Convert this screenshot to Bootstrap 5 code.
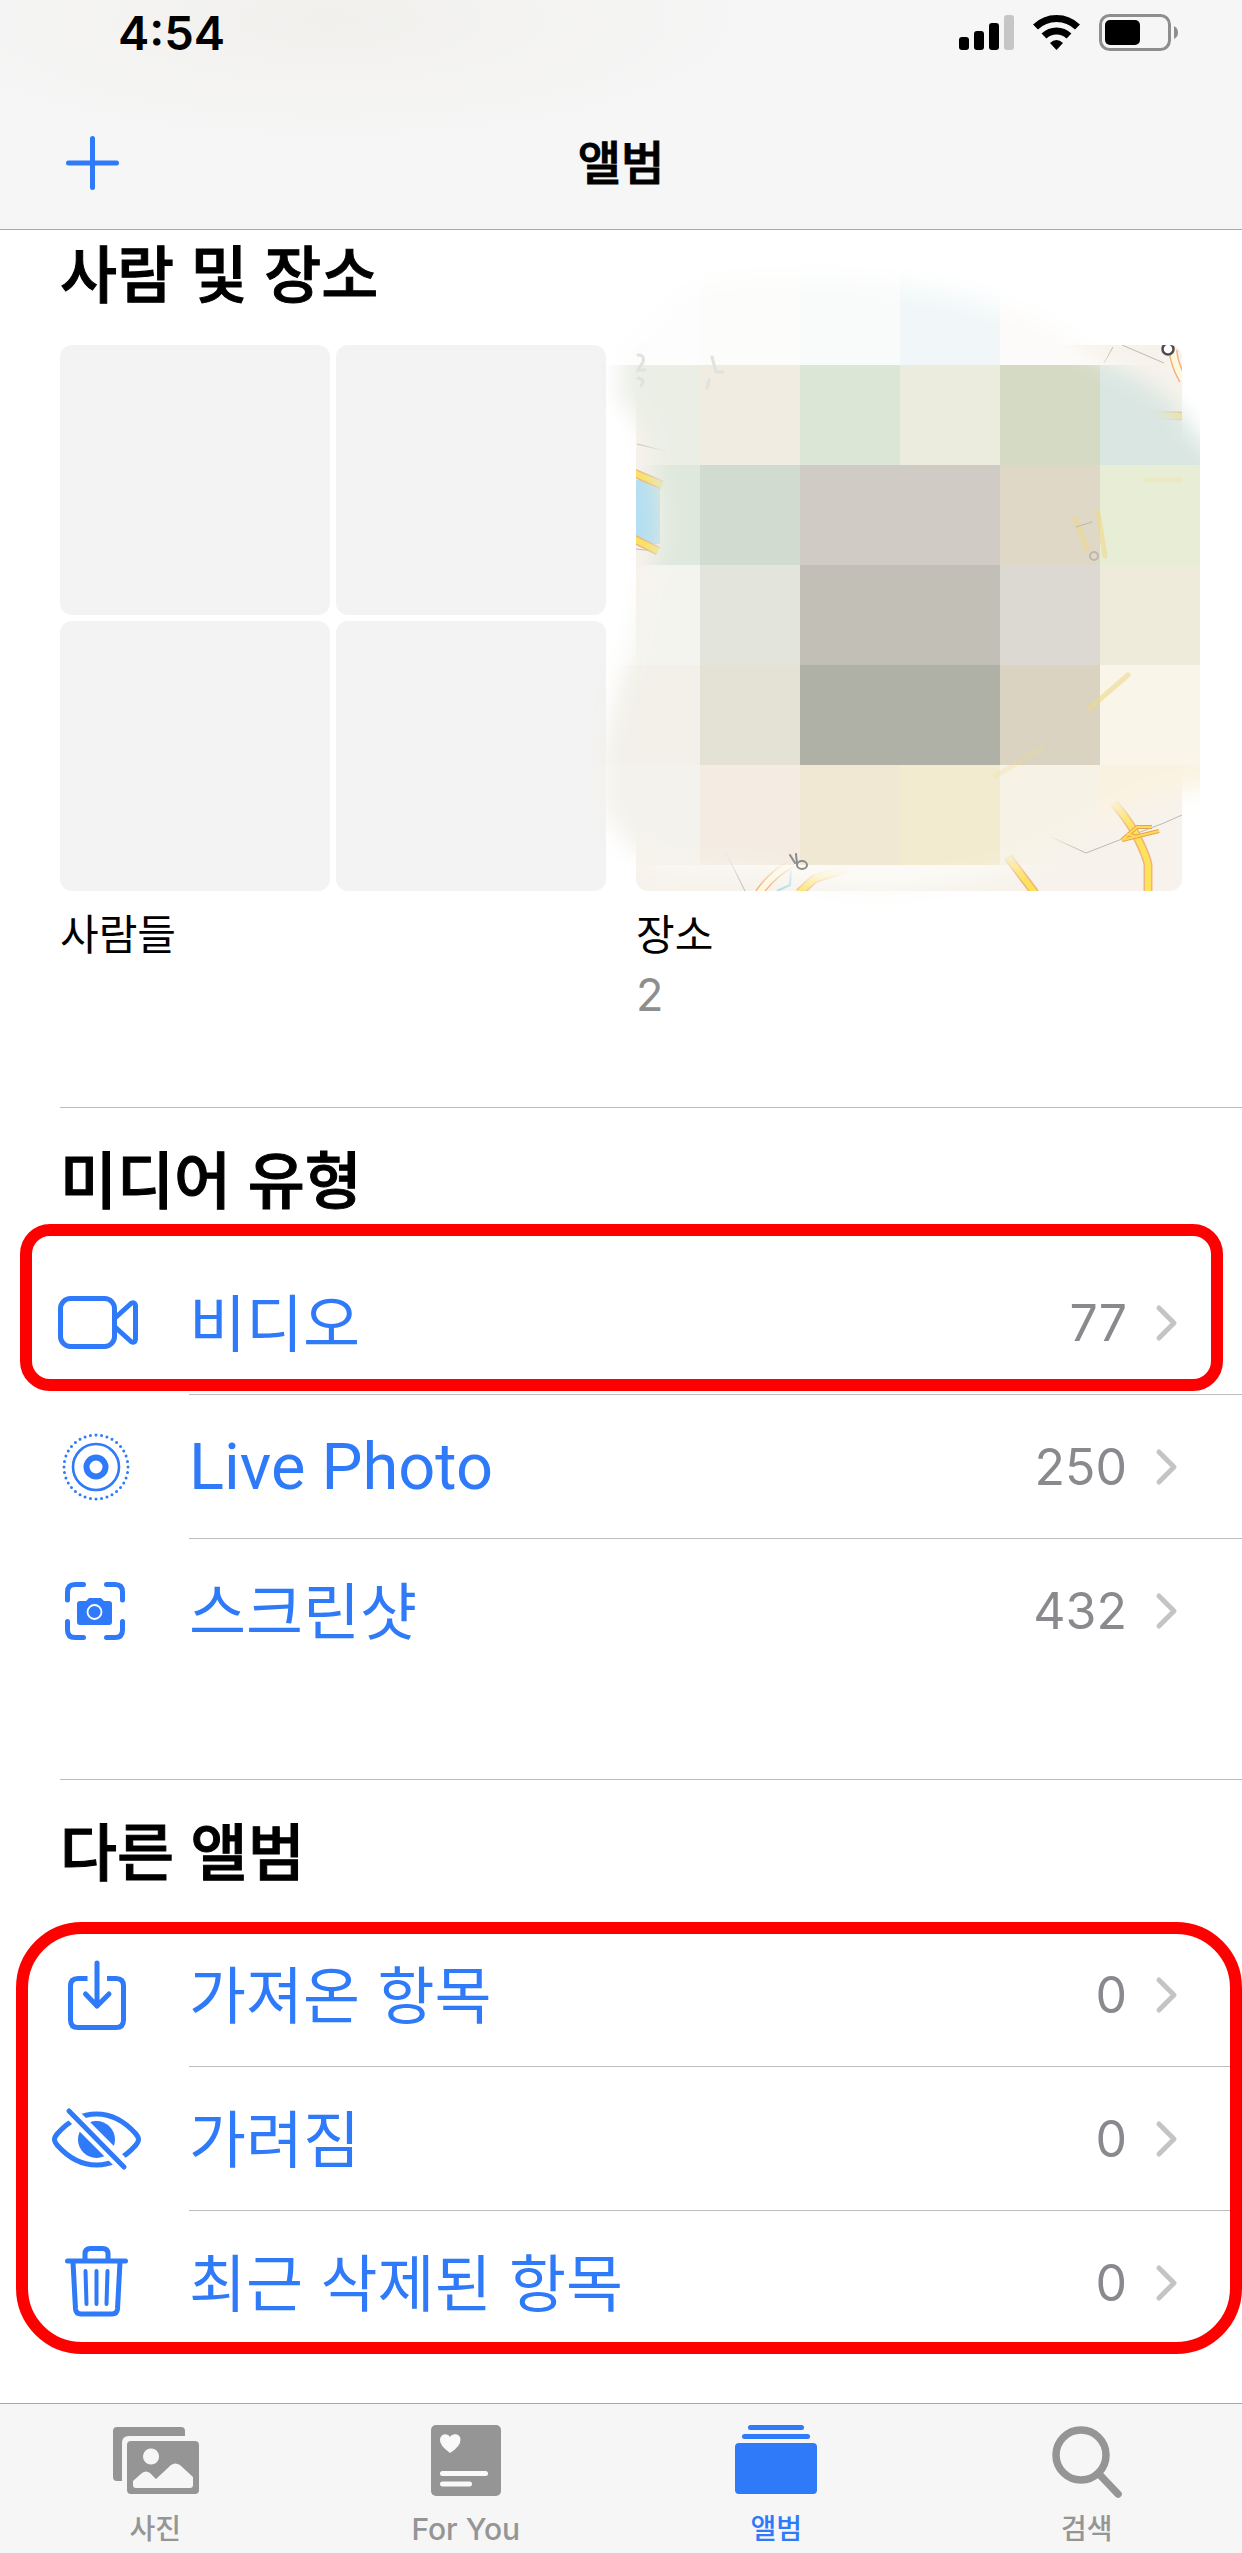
<!DOCTYPE html>
<html lang="ko">
<head>
<meta charset="utf-8">
<meta name="viewport" content="width=device-width, initial-scale=1">
<title>앨범</title>
<link rel="stylesheet" href="https://cdn.jsdelivr.net/npm/bootstrap@5.3.0/dist/css/bootstrap.min.css">
<style>
  :root { --tint: #2f7af8; --bar: #f6f6f6; --line: #bcbcbe; --muted: #8a8a8e; --mark-red: #ff0000; }
  body { font-family: Inter, "Noto Sans CJK KR", sans-serif; color: #000; background: #fff; }
  a { text-decoration: none; }
  .top-bar { background: radial-gradient(ellipse 420px 120px at 330px 20px, #f1f0ed, transparent), var(--bar); border-bottom: 1px solid #a9a9a9; }
  .status { height: 96px; padding: 9px 63px 0 118px; }
  .clock { font-size: 47px; line-height: 48px; font-weight: 600; }
  .status svg { display: block; margin-top: 4px; }
  .nav-row { height: 133px; padding: 0 60px; display: grid; grid-template-columns: 1fr auto 1fr; align-items: center; }
  .add-btn { width: 66px; height: 66px; color: var(--tint); line-height: 0; }
  .page-title { font-size: 47px; line-height: 66px; font-weight: 500; -webkit-text-stroke: 1px currentColor; }
  .section-title { font-size: 62px; line-height: 87px; font-weight: 500; -webkit-text-stroke: 1px currentColor; }
  .people-places { padding: 2px 60px 80px; }
  .people-places .section-title { margin-bottom: 26px; }
  .thumbs { --bs-gutter-x: 30px; }
  .thumb-grid { display: grid; grid-template-columns: 1fr 1fr; gap: 6px; }
  .thumb-grid span { aspect-ratio: 1; border-radius: 12px; background: #f3f3f3; }
  .map { display: block; width: 100%; overflow: visible; }
  .thumb-label { font-size: 42px; line-height: 60px; padding-top: 14px; }
  .thumb-count { font-size: 45px; line-height: 60px; padding-bottom: 2px; color: #8e8e8e; }
  .list-section { margin-left: 60px; border-top: 1px solid var(--line); }
  .list-section .section-title { padding: 30px 0 26px; }
  .other-albums { padding-top: 96px; }
  .album-list { position: relative; }
  .album-list a { display: flex; align-items: center; gap: 45px; padding-left: 48px; height: 144px; color: var(--tint); position: relative; }
  .album-list svg.ico { width: 96px; height: 96px; flex: none; }
  .row-body { flex: 1; height: 144px; padding-right: 63px; border-bottom: 1px solid var(--line); font-size: 62px; }
  .row-name { padding-top: 3px; }
  .latin { font-family: Roboto, sans-serif; font-size: 65px; }
  .album-list li:last-child .row-body { border-bottom-color: transparent; }
  .row-count { font-size: 50px; padding-top: 2px; color: var(--muted); }
  .chev { width: 24px; height: 40px; margin-left: 28px; }
  .ring-video::after, .ring-group::after { content: ""; position: absolute; border: 12px solid var(--mark-red); pointer-events: none; z-index: 1; }
  .ring-video::after { inset: -27px 19px 4px 20px; border-radius: 30px; }
  .ring-group::after { inset: -1px 0 1px 16px; border-radius: 66px; }
  .tab-bar { background: var(--bar); border-top: 1px solid #a9a9a9; height: 150px; }
  .tab-bar a { color: #959595; font-size: 28px; line-height: 36px; font-weight: 500; padding-top: 15px; }
  .tab-bar a.active { color: var(--tint); }
  .tab-bar .tab-latin { font-size: 30px; }
  .tab-bar svg { width: 96px; height: 84px; margin-bottom: 8px; }
</style>
</head>
<body class="d-flex flex-column min-vh-100">

<header class="top-bar">
  <div class="status d-flex justify-content-between">
    <span class="clock">4:54</span>
    <svg width="222" height="40" viewBox="956 13 222 40" aria-label="상태">
      <g><rect x="958" y="37" width="10" height="13" rx="3"/><rect x="973" y="31" width="10" height="19" rx="3"/><rect x="988" y="23" width="10" height="27" rx="3"/><rect x="1003" y="15" width="10" height="35" rx="3" fill="#c6c6c6"/></g>
      <g fill="none" stroke="#000" stroke-width="7"><path d="M1034.500 27a30 30 0 0 1 42 0"/><path d="M1043 36a18 18 0 0 1 25 0"/></g>
      <path d="M1049 43q6.500-6 13 0l-6.500 7z"/>
      <rect x="1099.500" y="15.500" width="69" height="34" rx="9" fill="none" stroke="#8e8e8e" stroke-width="3"/>
      <rect x="1104" y="20" width="35" height="25" rx="5"/>
      <path d="M1173 26q4 2 4 6.500t-4 6.500z" fill="#8e8e8e"/>
    </svg>
  </div>
  <div class="nav-row">
    <button type="button" class="add-btn btn p-0 border-0" aria-label="추가">
      <svg width="66" height="66" viewBox="0 0 66 66" fill="none" stroke="currentColor" stroke-width="5" stroke-linecap="round"><path d="M32.500 8.500v49M8.500 33h48"/></svg>
    </button>
    <h1 class="page-title m-0">앨범</h1>
  </div>
</header>

<main class="flex-grow-1">
  <section class="people-places">
    <h2 class="section-title mt-0">사람 및 장소</h2>
    <div class="row thumbs">
      <div class="col-6">
        <a href="#" class="text-reset d-block">
          <div class="thumb-grid"><span></span><span></span><span></span><span></span></div>
          <div class="thumb-label">사람들</div>
        </a>
      </div>
      <div class="col-6">
        <a href="#" class="text-reset d-block">
          <svg class="map" viewBox="636 345 546 546" aria-label="지도">
            <defs>
              <clipPath id="tile"><rect x="636" y="345" width="546" height="546" rx="12"/></clipPath>
              <clipPath id="cells"><rect x="590" y="250" width="610" height="660"/></clipPath>
              <filter id="soft" filterUnits="userSpaceOnUse" x="540" y="200" width="740" height="760"><feGaussianBlur stdDeviation="11"/></filter>
              <mask id="brush" maskUnits="userSpaceOnUse" x="540" y="200" width="740" height="760">
                <path filter="url(#soft)" fill="#fff" d="M622 345Q650 335 672 300Q700 274 800 278Q950 280 1050 325Q1080 350 1120 370Q1165 385 1200 440L1240 470V780L1170 792Q1110 815 1080 835Q1020 870 960 880Q860 905 760 870Q700 868 660 865Q590 830 602 760Q615 690 635 640Q642 590 655 560Q665 520 652 470Q650 420 620 400Z"/>
              </mask>
            </defs>
            <g clip-path="url(#tile)">
              <rect x="636" y="345" width="546" height="546" fill="#f7f3ec"/>
              <rect x="630" y="480" width="30" height="64" fill="#b4dff2"/>
              <g fill="none" stroke="#bbb9b3"><path d="M1122 345l42 18M1113 347l-9 16M637 444l28 7M1051 837l35 16 36-14 42-16 18-8M725 851l20 40M636 549l18 2"/></g>
              <g fill="none" stroke="#f2b27c" stroke-width="9"><path d="M1173 350q1 14 10 30M1148 415l36 1M634 473l28 12M634 539l24 12M1114 803q18 22 23 34 10 20 11 28v30M1008 857l27 36M799 893l15-14 34-11M759 893q14-20 34-30"/></g>
              <g fill="none" stroke="#fde25c" stroke-width="6"><path d="M1148 415l36 1M634 473l28 12M634 539l24 12M1114 803q18 22 23 34 10 20 11 28v30M1008 857l27 36M799 893l15-14 34-11"/><path d="M1152 827h-15l-15 13 37-9M1137 837l-10-3" stroke="#eba24b" stroke-width="4"/><path d="M1152 827h-15l-15 13 37-9M1137 837l-10-3" stroke="#fddb57" stroke-width="2"/></g>
              <g fill="none" stroke="#fff8df" stroke-width="6"><path d="M1173 350q1 14 10 30M759 893q14-20 34-30"/></g>
              <path d="M777 891l13-6 1-14" fill="none" stroke="#a9daf0" stroke-width="2"/>
              <circle cx="1168" cy="349" r="5.500" fill="#fff" stroke="#4c4c50" stroke-width="2.500"/>
            </g>
            <g mask="url(#brush)"><g clip-path="url(#cells)" shape-rendering="crispEdges">
              <g><rect x="590" y="250" width="110" height="115" fill="#fdfdfd"/><rect x="700" y="250" width="100" height="115" fill="#fcfcfa"/><rect x="800" y="250" width="100" height="115" fill="#f9fafa"/><rect x="900" y="250" width="100" height="115" fill="#f1f7f8"/><rect x="1000" y="250" width="200" height="115" fill="#fdfbf9"/></g>
              <g><rect x="590" y="365" width="110" height="100" fill="#ebeee5"/><rect x="700" y="365" width="100" height="100" fill="#f0ece1"/><rect x="800" y="365" width="100" height="100" fill="#dbe6d6"/><rect x="900" y="365" width="100" height="100" fill="#ebecde"/><rect x="1000" y="365" width="100" height="100" fill="#d4dac4"/><rect x="1100" y="365" width="100" height="100" fill="#dae6e2"/></g>
              <g><rect x="590" y="465" width="110" height="100" fill="#dfe8dd"/><rect x="700" y="465" width="100" height="100" fill="#d1dbd0"/><rect x="800" y="465" width="200" height="100" fill="#d0ccc5"/><rect x="1000" y="465" width="100" height="100" fill="#dfd8c6"/><rect x="1100" y="465" width="100" height="100" fill="#e8eed6"/></g>
              <g><rect x="590" y="565" width="110" height="100" fill="#f4f4ee"/><rect x="700" y="565" width="100" height="100" fill="#e3e5dd"/><rect x="800" y="565" width="200" height="100" fill="#c2bfb7"/><rect x="1000" y="565" width="100" height="100" fill="#dcd9d3"/><rect x="1100" y="565" width="100" height="100" fill="#eeebdb"/></g>
              <g><rect x="590" y="665" width="110" height="100" fill="#f2f0e9"/><rect x="700" y="665" width="100" height="100" fill="#e3e2d5"/><rect x="800" y="665" width="200" height="100" fill="#b0b1a6"/><rect x="1000" y="665" width="100" height="100" fill="#dad3c1"/><rect x="1100" y="665" width="100" height="100" fill="#f9f5e8"/></g>
              <g><rect x="590" y="765" width="110" height="100" fill="#f4f2ec"/><rect x="700" y="765" width="100" height="100" fill="#f4ece3"/><rect x="800" y="765" width="100" height="100" fill="#f0e8d2"/><rect x="900" y="765" width="100" height="100" fill="#f3ebcf"/><rect x="1000" y="765" width="100" height="100" fill="#f6f2e6"/><rect x="1100" y="765" width="100" height="100" fill="#faf2e1"/></g>
              <rect x="590" y="865" width="610" height="50" fill="#fbfaf6"/>
            </g></g>
            <g fill="none" stroke-linecap="round">
              <g stroke="#efd98c" stroke-width="5" opacity=".6"><path d="M1075 518l12 31M1098 512l7 44M1090 708l38-33"/><path d="M1146 480h34M996 776l46-28" opacity=".4"/></g>
              <g stroke="#b5b0a5" opacity=".8"><circle cx="1094" cy="556" r="4" stroke-width="2"/><path d="M1076 527l16-5"/></g>
              <g stroke="#e0e2de" stroke-width="3"><path d="M638 355q7 0 5 7l-5 8h7M638 378q8 2 3 8M712 357l4 15h7M707 388l2-8"/></g>
              <g stroke="#8a8a88" stroke-width="2"><ellipse cx="802" cy="865" rx="5" ry="4"/><path d="M790 855l5 8M796 854l1 10"/></g>
            </g>
          </svg>
          <div class="thumb-label">장소</div>
          <div class="thumb-count">2</div>
        </a>
      </div>
    </div>
  </section>

  <section>
    <div class="list-section"><h2 class="section-title m-0">미디어 유형</h2></div>
    <ul class="album-list list-unstyled m-0">
      <li><a href="#" class="ring-video">
        <svg class="ico" viewBox="0 0 96 96" fill="none" stroke="currentColor" stroke-width="5" stroke-linejoin="round"><rect x="12.500" y="23.500" width="54" height="48" rx="10"/><path d="M67 43l16-14.500q4-2 4.500 2v34q-.5 4-4.500 2L67 52"/></svg>
        <span class="row-body d-flex align-items-center"><span class="row-name me-auto">비디오</span><span class="row-count">77</span><svg class="chev" viewBox="0 0 24 40" fill="none" stroke="#c4c4c6" stroke-width="5" stroke-linecap="round" stroke-linejoin="round"><path d="M4 5l15 15L4 35"/></svg></span>
      </a></li>
      <li><a href="#">
        <svg class="ico" viewBox="0 0 96 96" fill="none" stroke="currentColor"><circle cx="48" cy="48" r="32" stroke-width="3" stroke-linecap="round" pathLength="360" stroke-dasharray="0 10"/><circle cx="48" cy="48" r="23" stroke-width="2.600"/><circle cx="48" cy="48" r="9.500" stroke-width="6"/></svg>
        <span class="row-body d-flex align-items-center"><span class="row-name latin me-auto">Live Photo</span><span class="row-count">250</span><svg class="chev" viewBox="0 0 24 40" fill="none" stroke="#c4c4c6" stroke-width="5" stroke-linecap="round" stroke-linejoin="round"><path d="M4 5l15 15L4 35"/></svg></span>
      </a></li>
      <li><a href="#">
        <svg class="ico" viewBox="0 0 96 96" fill="none" stroke="currentColor" stroke-width="5" stroke-linecap="round"><path d="M19.500 37V29q0-7.500 7.500-7.500h8.500M58.500 21.500H67q7.500 0 7.500 7.500v8M74.500 58.500V67q0 7.500-7.500 7.500h-8.500M35.500 74.500H27q-7.500 0-7.500-7.500v-8.500"/><path stroke="none" fill="currentColor" d="M32 38h6l3-3h12l3 3h5q3 0 3 3v18q0 3-3 3H32q-3 0-3-3V41q0-3 3-3z"/><circle cx="46.500" cy="49" r="7" stroke="#fff" stroke-width="1.800"/></svg>
        <span class="row-body d-flex align-items-center"><span class="row-name me-auto">스크린샷</span><span class="row-count">432</span><svg class="chev" viewBox="0 0 24 40" fill="none" stroke="#c4c4c6" stroke-width="5" stroke-linecap="round" stroke-linejoin="round"><path d="M4 5l15 15L4 35"/></svg></span>
      </a></li>
    </ul>
  </section>

  <section class="other-albums">
    <div class="list-section"><h2 class="section-title m-0">다른 앨범</h2></div>
    <ul class="album-list ring-group list-unstyled m-0">
      <li><a href="#">
        <svg class="ico" viewBox="0 0 96 96" fill="none" stroke="currentColor" stroke-width="5"><path d="M39.500 31.500H30q-7.500 0-7.500 7.500v34q0 7.500 7.500 7.500h38q7.500 0 7.500-7.500V39q0-7.500-7.500-7.500h-9"/><path stroke-linecap="round" stroke-linejoin="round" d="M49 16v43M37.500 47L49 59l12-12"/></svg>
        <span class="row-body d-flex align-items-center"><span class="row-name me-auto">가져온 항목</span><span class="row-count">0</span><svg class="chev" viewBox="0 0 24 40" fill="none" stroke="#c4c4c6" stroke-width="5" stroke-linecap="round" stroke-linejoin="round"><path d="M4 5l15 15L4 35"/></svg></span>
      </a></li>
      <li><a href="#">
        <svg class="ico" viewBox="0 0 96 96" fill="none" stroke="currentColor" stroke-width="5"><path d="M6.500 48.500q0-2.500 3-6Q27 23 48.500 23T87.500 42.500q3 3.500 3 6t-3 6Q70 74 48.500 74T9.500 54.500q-3-3.500-3-6z"/><circle cx="48.500" cy="48.500" r="18.500" fill="currentColor" stroke="none"/><path stroke="#fff" stroke-width="14" d="M21 20l60 60"/><path stroke-linecap="round" d="M21 20l55 56"/></svg>
        <span class="row-body d-flex align-items-center"><span class="row-name me-auto">가려짐</span><span class="row-count">0</span><svg class="chev" viewBox="0 0 24 40" fill="none" stroke="#c4c4c6" stroke-width="5" stroke-linecap="round" stroke-linejoin="round"><path d="M4 5l15 15L4 35"/></svg></span>
      </a></li>
      <li><a href="#">
        <svg class="ico" viewBox="0 0 96 96" fill="none" stroke="currentColor" stroke-width="5" stroke-linecap="round"><path d="M19.500 26h58M25 27l2.500 47q.5 5 5.500 5h31q5 0 5.500-5L72 27M37 25v-6q0-5.500 5.500-5.500h12q5.500 0 5.500 5.500v6"/><path stroke-width="4" d="M37.500 36l1 33M48.500 36v33M59.500 36l-1 33"/></svg>
        <span class="row-body d-flex align-items-center"><span class="row-name me-auto">최근 삭제된 항목</span><span class="row-count">0</span><svg class="chev" viewBox="0 0 24 40" fill="none" stroke="#c4c4c6" stroke-width="5" stroke-linecap="round" stroke-linejoin="round"><path d="M4 5l15 15L4 35"/></svg></span>
      </a></li>
    </ul>
  </section>
</main>

<nav class="tab-bar d-flex">
  <a href="#" class="col d-flex flex-column align-items-center">
    <svg viewBox="0 0 96 84" fill="currentColor"><path d="M10 8h64q4 0 4 4v5H22q-7 0-7 7v38h-5q-4 0-4-4V12q0-4 4-4z"/><path fill-rule="evenodd" d="M24 22h64q4 0 4 4v45q0 4-4 4H24q-4 0-4-4V26q0-4 4-4zM26 62v4q0 3 3 3h54q3 0 3-3v-8L73 46q-5-3-9 0L49 60l-6-6q-4-3-8 0zM44 29.500a8 8 0 1 0 .1 0z"/></svg>사진
  </a>
  <a href="#" class="tab-latin col d-flex flex-column align-items-center">
    <svg viewBox="0 0 96 84"><rect x="13" y="6" width="70" height="71" rx="5" fill="currentColor"/><path fill="#f9f9f9" d="M32 34Q21 26 22 20c1-6 8-6 10-2 2-4 10-4 10.500 2Q43 27 32 34z"/><path d="M24.500 54.500h43M24.500 65h27" stroke="#f9f9f9" stroke-width="5" stroke-linecap="round"/></svg>For You
  </a>
  <a href="#" class="active col d-flex flex-column align-items-center" aria-current="page">
    <svg viewBox="0 0 96 84" fill="currentColor"><rect x="20" y="6" width="56" height="5" rx="2.500"/><rect x="14" y="15" width="68" height="5" rx="2.500"/><rect x="7" y="24" width="82" height="51" rx="4"/></svg>앨범
  </a>
  <a href="#" class="col d-flex flex-column align-items-center">
    <svg viewBox="0 0 96 84" fill="none" stroke="currentColor" stroke-width="7.500"><circle cx="42" cy="36" r="25"/><path d="M60 55l19 20" stroke-linecap="round"/></svg>검색
  </a>
</nav>

<script src="https://cdn.jsdelivr.net/npm/bootstrap@5.3.0/dist/js/bootstrap.bundle.min.js"></script>
</body>
</html>
